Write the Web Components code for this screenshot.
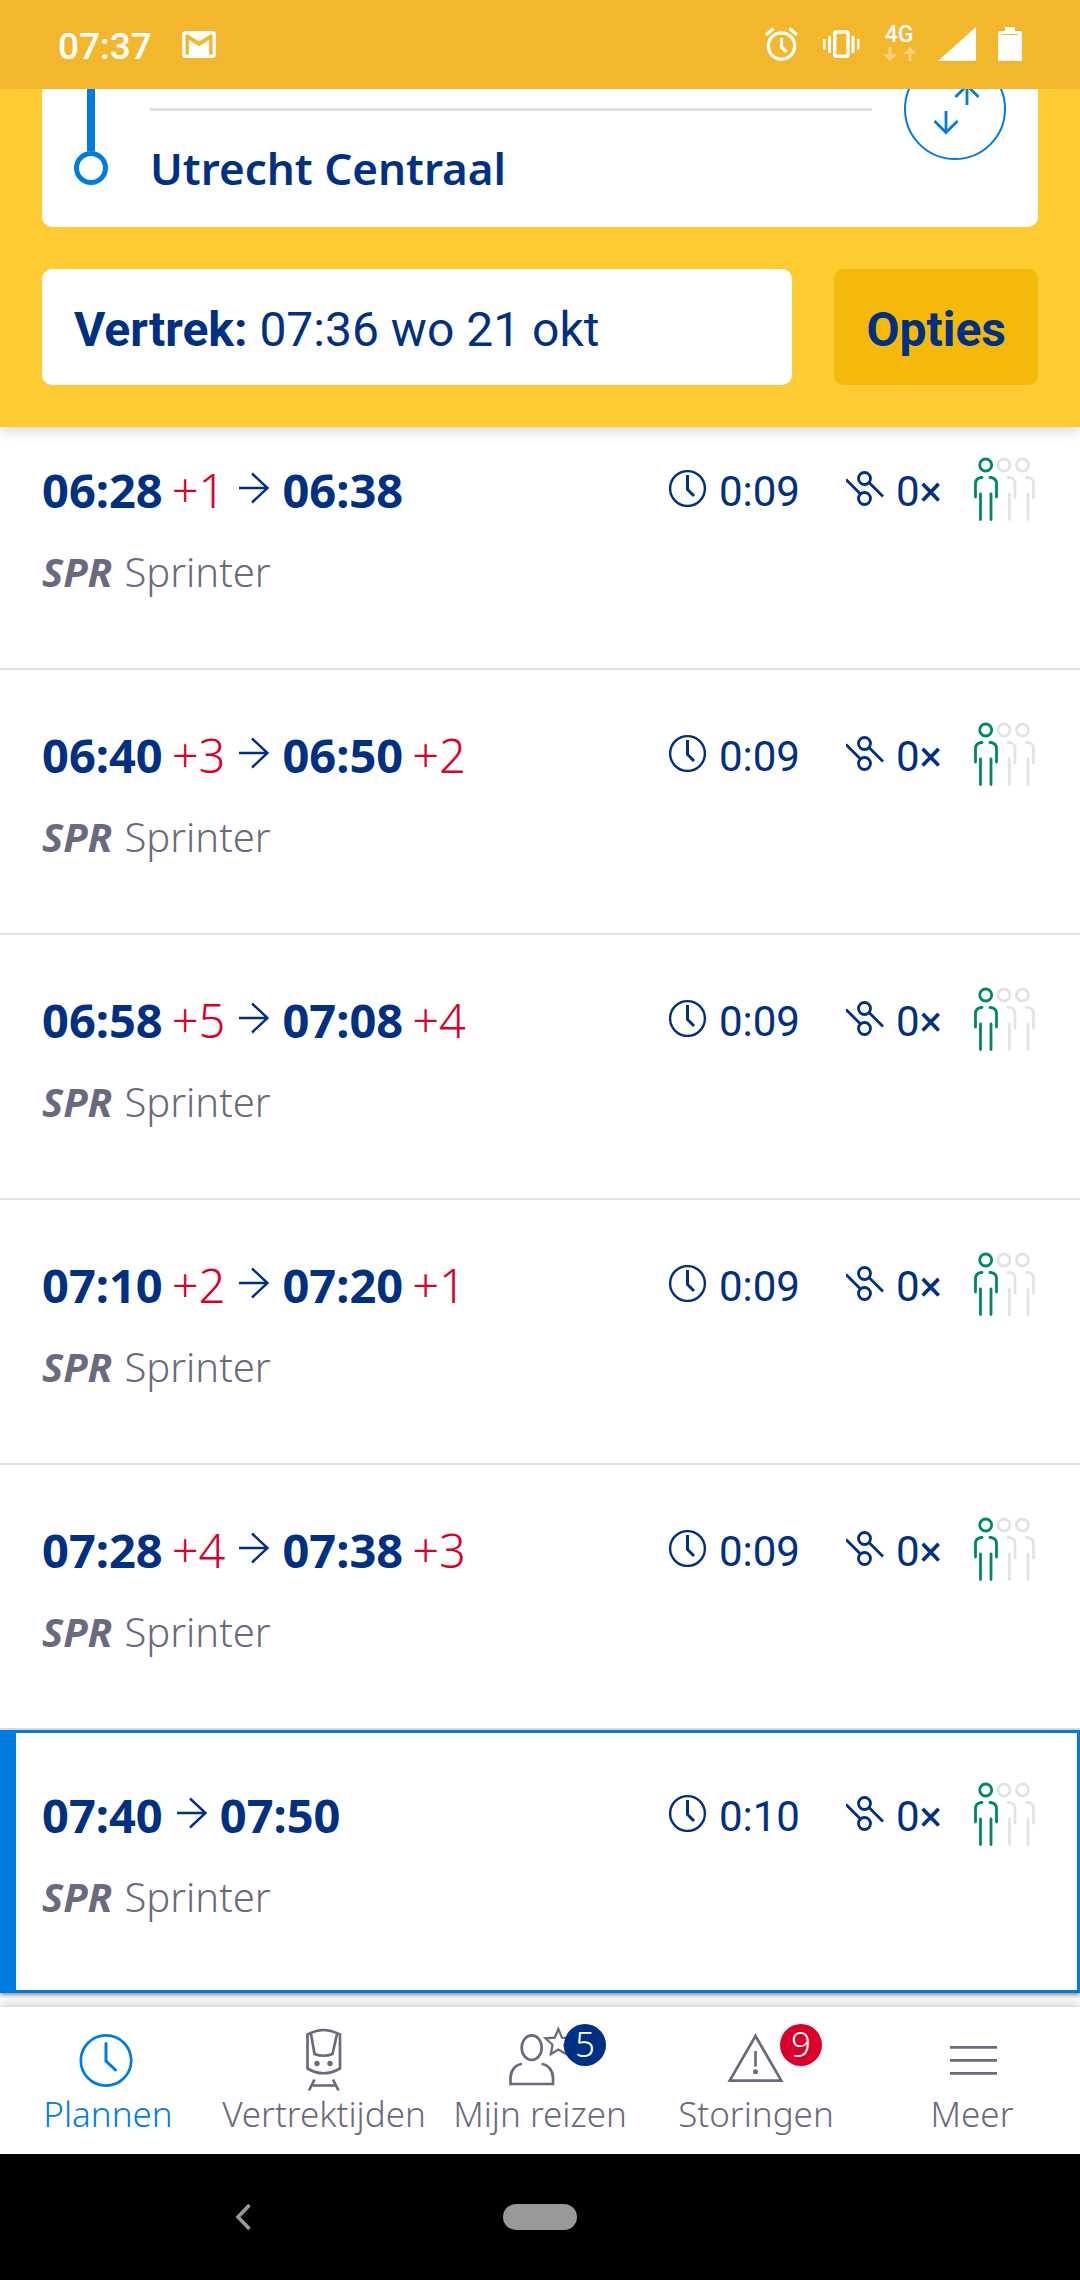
<!DOCTYPE html>
<html lang="nl">
<head>
<meta charset="utf-8">
<meta name="viewport" content="width=device-width, initial-scale=1">
<title>Reisplanner</title>
<style>
  html { background: #fff; }
  body { margin: 0; font-family: "Noto Sans", "Open Sans", sans-serif; color: #003082; }
</style>
</head>
<body>
<planner-app></planner-app>

<template id="planner-app">
  <style>
    :host { display: flex; flex-direction: column; min-height: 100vh; --navy: #003082; --blue: #007bdf; --grey: #6b697d; --red: #db0029; --ui: Roboto, sans-serif; }
    main { flex: 1; margin-top: -22px; }
  </style>
  <status-bar time="07:37"></status-bar>
  <search-header>
    <span slot="destination">Utrecht Centraal</span>
    <span slot="moment">07:36 wo 21 okt</span>
  </search-header>
  <main>
    <trip-row dep="06:28" dep-delay="+1" arr="06:38" duration="0:09"></trip-row>
    <trip-row dep="06:40" dep-delay="+3" arr="06:50" arr-delay="+2" duration="0:09"></trip-row>
    <trip-row dep="06:58" dep-delay="+5" arr="07:08" arr-delay="+4" duration="0:09"></trip-row>
    <trip-row dep="07:10" dep-delay="+2" arr="07:20" arr-delay="+1" duration="0:09"></trip-row>
    <trip-row dep="07:28" dep-delay="+4" arr="07:38" arr-delay="+3" duration="0:09"></trip-row>
    <trip-row dep="07:40" arr="07:50" duration="0:10" selected></trip-row>
  </main>
  <tab-bar>
    <tab-item icon="clock" active>Plannen</tab-item>
    <tab-item icon="train">Vertrektijden</tab-item>
    <tab-item icon="person" badge="5">Mijn reizen</tab-item>
    <tab-item icon="warning" badge="9" alert>Storingen</tab-item>
    <tab-item icon="menu">Meer</tab-item>
  </tab-bar>
  <system-bar></system-bar>
</template>

<template id="status-bar">
  <style>
    :host { display: flex; align-items: center; gap: 30px; height: 89px; padding: 0 58px; background: #f3b72e; color: #fff; font: 500 37px/44px var(--ui); position: relative; z-index: 3; }
    .time { padding-top: 4px; }
    .right { display: flex; align-items: center; gap: 22px; margin-left: auto; }
    svg { display: block; }
    .net { font-size: 23px; line-height: 20px; width: 34px; text-align: center; }
  </style>
  <span class="time"></span>
  <svg width="34" height="27" viewBox="2 4 20 16" fill="#fff" fill-rule="evenodd"><path d="M20 18h-2V9.25L12 13 6 9.25V18H4V6h1.2l6.8 4.25L18.8 6H20zM20 4H4c-1.1 0-2 .9-2 2v12c0 1.1.9 2 2 2h16c1.1 0 2-.9 2-2V6c0-1.1-.9-2-2-2z"/></svg>
  <div class="right">
    <svg width="36" height="39" fill="none" stroke="#fff" stroke-width="3.200"><circle cx="17.500" cy="21" r="13.200"/><path d="M17.500 13v9l5 5M2 10l7.500-6.500M25.500 3.500L33 10"/></svg>
    <svg width="38" height="39"><rect x="12.700" y="7" width="13.300" height="24.300" rx="1.500" fill="none" stroke="#fff" stroke-width="3.400"/><path fill="#fff" d="M1 14h2.500v10.500H1zM6 11h3v17H6zM29.500 11h3v17h-3zM35 14h2.500v10.500H35z"/></svg>
    <div class="net"><span>4G</span><svg width="34" height="19" fill="#fff" fill-opacity=".35"><path d="M6.500 2h3v7H15l-7 7-7-7h5.500zM26.500 16h3V9H35l-7-7-7 7h5.500z"/></svg></div>
    <svg width="38" height="39" fill="#fff"><path d="M0 36L38 2v34z"/></svg>
    <svg width="24" height="39"><path fill="#fff" d="M7 2h10v4h5.500q1.500 0 1.500 1.500V35q0 1-1 1H1q-1 0-1-1V7.500Q0 6 1.500 6H7z"/><path stroke="#f3b72e" stroke-width="1" d="M4 9.500h16"/></svg>
  </div>
</template>

<template id="search-header">
  <style>
    :host { display: flex; flex-direction: column; gap: 42px; padding: 0 42px 42px; background: #ffcb32; box-shadow: 0 2px 14px rgba(0,0,0,.2); position: relative; z-index: 2; }
    .card { display: flex; align-items: flex-start; padding: 0 32px; background: #fff; border-radius: 0 0 10px 10px; overflow: hidden; }
    .rail { width: 34px; display: flex; flex-direction: column; align-items: center; }
    .rail i { width: 8px; height: 62px; background: var(--blue); }
    .rail b { box-sizing: border-box; width: 34px; height: 34px; border: 5px solid var(--blue); border-radius: 50%; }
    .fields { flex: 1; margin: 0 32px 0 42px; padding: 19px 0 29px; }
    hr { margin: 0 0 27px; border: 0; height: 3px; background: #dfe2e4; }
    .dest { font-weight: 600; font-size: 44px; line-height: 60px; }
    button { font: 400 48px/56px var(--ui); color: var(--navy); border: 0; margin: 0; }
    .swap { box-sizing: border-box; width: 102px; height: 102px; margin-top: -31px; padding: 0; background: #fff; border: 2px solid var(--blue); border-radius: 50%; }
    .swap svg { display: block; }
    .row { display: flex; gap: 42px; }
    .row button { height: 116px; padding: 6px 32px 0; border-radius: 10px; text-align: left; background: #fff; }
    .row .when { flex: 1; }
    .row .opt { background: #f5b90b; font-weight: 700; }
  </style>
  <div class="card">
    <div class="rail"><i></i><b></b></div>
    <div class="fields"><hr><div class="dest"><slot name="destination"></slot></div></div>
    <button class="swap" aria-label="Wissel van en naar"><svg width="98" height="98" fill="none" stroke="#007bdf" stroke-width="2.800"><path d="M40 51v22M28.500 61L40 72.500 51.500 61M61 45V23M49.500 37L61 25.500 72.500 37"/></svg></button>
  </div>
  <div class="row">
    <button class="when"><b>Vertrek:</b> <slot name="moment"></slot></button>
    <button class="opt">Opties</button>
  </div>
</template>

<template id="trip-row">
  <style>
    :host { display: block; border-bottom: 2px solid #e1e1e1; }
    :host([selected]) { border-bottom: 0; }
    a { box-sizing: border-box; display: flex; flex-direction: column; gap: 28px; height: 263px; padding: 55px 42px 0; color: var(--navy); text-decoration: none; background: #fff; }
    :host([selected]) a { box-shadow: inset 16px 0 0 var(--blue), inset 0 0 0 3px var(--blue), 0 2px 4px rgba(0,0,0,.45); }
    .line { display: flex; align-items: center; height: 56px; }
    .t, .d { font-size: 47px; line-height: 56px; padding-top: 3px; }
    .t { font-weight: 700; }
    .d { font-weight: 340; color: var(--red); margin-left: 9px; }
    .d:empty { display: none; }
    .arrow { margin: 0 12px 0 13px; }
    .facts { display: flex; align-items: center; margin-left: auto; font: 400 42px/48px var(--ui); }
    .facts span { padding-top: 8px; margin-left: 12px; }
    .change { margin-left: 46px; }
    .crowd { margin-left: 30px; }
    svg { display: block; flex: none; }
    .kind { font-size: 40px; line-height: 56px; font-weight: 340; color: var(--grey); display: flex; gap: 12px; }
    em { font-weight: 700; }
  </style>
  <a href="#reis">
    <div class="line">
      <span class="t dep"></span><span class="d dd"></span>
      <svg class="arrow" width="32" height="32" fill="none" stroke="#003082" stroke-width="2.400"><path d="M1 16h29M14 1.500L29.500 16 14 30.500"/></svg>
      <span class="t arr"></span><span class="d ad"></span>
      <div class="facts">
        <svg width="38" height="38" fill="none" stroke="#003082" stroke-width="2.400"><circle cx="18.500" cy="19.500" r="17.400"/><path stroke-width="3" d="M18.500 6v14.500l6.500 6.500"/></svg>
        <span class="dur"></span>
        <svg class="change" width="38" height="38" fill="none" stroke="#003082" stroke-width="2.800"><circle cx="18.500" cy="9.500" r="6"/><circle cx="18.500" cy="29.500" r="6"/><path d="M0 10.500l14 14M23 13.500l14 14"/></svg>
        <span>0×</span>
        <svg class="crowd" width="66" height="66" fill="none" stroke-width="2.800" stroke-linecap="round">
          <g stroke="#e1e3e4"><circle cx="32" cy="10" r="6"/><circle cx="50.500" cy="10" r="6"/><path d="M36 22.500h2q5 1 5 6V43M37.500 39v25.500M54.500 22.500h2q5 1 5 6V43M56 39v25.500"/></g>
          <g stroke="#008768"><circle cx="13.700" cy="10" r="6"/><path d="M10 22.500H9q-5.500 1-5.500 6V42M18 22.500h1q5.500 1 5.500 6V42M8.500 39v25.500M19 39v25.500"/></g>
        </svg>
      </div>
    </div>
    <div class="kind"><em>SPR</em><span>Sprinter</span></div>
  </a>
</template>

<template id="tab-bar">
  <style>
    :host { display: block; background: #fff; box-shadow: 0 -1px 12px rgba(0,0,0,.25); position: relative; z-index: 2; }
    nav { display: grid; grid-template-columns: repeat(5, minmax(0, 1fr)); }
  </style>
  <nav><slot></slot></nav>
</template>

<template id="tab-item">
  <style>
    :host { display: block; }
    a { display: flex; flex-direction: column; align-items: center; gap: 1px; padding: 22px 0 20px; color: var(--grey); text-decoration: none; font-size: 35px; line-height: 40px; font-weight: 340; white-space: nowrap; }
    :host([active]) a { color: var(--blue); }
    .icon { position: relative; width: 64px; height: 64px; }
    svg { display: block; overflow: visible; }
    .badge { position: absolute; left: 56px; top: -5px; width: 42px; height: 42px; border-radius: 50%; background: var(--navy); color: #fff; text-align: center; }
    :host([alert]) .badge { background: var(--red); }
    .badge:empty { display: none; }
  </style>
  <a href="#tab">
    <span class="icon"><svg width="64" height="64" fill="none" stroke="currentColor" stroke-width="2.700"></svg><span class="badge"></span></span>
    <slot></slot>
  </a>
</template>

<template id="system-bar">
  <style>
    :host { display: grid; grid-template-columns: 45% 10% 45%; justify-items: center; align-items: center; height: 126px; background: #000; position: relative; z-index: 3; }
    button { border: 0; padding: 0; background: none; }
    svg { display: block; }
    .home { width: 74px; height: 26px; border-radius: 13px; background: #999; }
  </style>
  <button aria-label="Terug"><svg width="16" height="28" fill="none" stroke="#999" stroke-width="3.600"><path d="M14.500 2L3 14l11.500 12"/></svg></button>
  <button class="home" aria-label="Start"></button>
</template>

<script>
  const tabIcons = {
    clock: '<circle cx="30" cy="31.500" r="25.200"/><path stroke-width="3" stroke-linecap="round" d="M30 14.500V32l9.500 9"/>',
    train: '<path d="M15.500 5.500Q31.500-3.500 48 5.500V39.500Q31.500 49 15.500 39.500zM19 5l3.500 20q9 3.500 18 0L45 5M22.500 50.500L17 61.500M41 50.500l5.500 11M20 56.500h23.500"/><g fill="currentColor" stroke="none"><circle cx="25" cy="34.500" r="2.700"/><circle cx="38" cy="34.500" r="2.700"/></g>',
    person: '<ellipse cx="23.700" cy="18.700" rx="10" ry="12.300"/><path d="M14 35C7 35.500 2.500 42 2.500 49v6H45v-6c0-7-4.500-13.500-11.500-14"/><path stroke-width="2.200" d="M50.300 0l3.700 8.700 9.300.8-7 6.300 2.200 9.400-8.200-4.700-7.500 4.700 1.700-9.400-7-6.500 9.300-.6z"/>',
    warning: '<path d="M31.500 7L5.700 51.700H57.300z"/><path d="M31.500 22v15.500"/><circle cx="31.500" cy="42.700" r="2.500" fill="currentColor" stroke="none"/>',
    menu: '<path d="M10 18.300h47M10 31.300h47M10 44.300h47"/>'
  };
  class Part extends HTMLElement {
    constructor() {
      super();
      this.attachShadow({ mode: 'open' }).append(document.getElementById(this.localName).content.cloneNode(true));
    }
    put(selector, attribute) {
      this.shadowRoot.querySelector(selector).textContent = this.getAttribute(attribute) || '';
    }
  }
  customElements.define('status-bar', class extends Part {
    connectedCallback() { this.put('.time', 'time'); }
  });
  customElements.define('search-header', class extends Part {});
  customElements.define('trip-row', class extends Part {
    connectedCallback() {
      this.put('.dep', 'dep'); this.put('.dd', 'dep-delay');
      this.put('.arr', 'arr'); this.put('.ad', 'arr-delay');
      this.put('.dur', 'duration');
    }
  });
  customElements.define('tab-item', class extends Part {
    connectedCallback() {
      this.shadowRoot.querySelector('svg').innerHTML = tabIcons[this.getAttribute('icon')];
      this.put('.badge', 'badge');
    }
  });
  customElements.define('tab-bar', class extends Part {});
  customElements.define('system-bar', class extends Part {});
  customElements.define('planner-app', class extends Part {});
</script>
</body>
</html>
